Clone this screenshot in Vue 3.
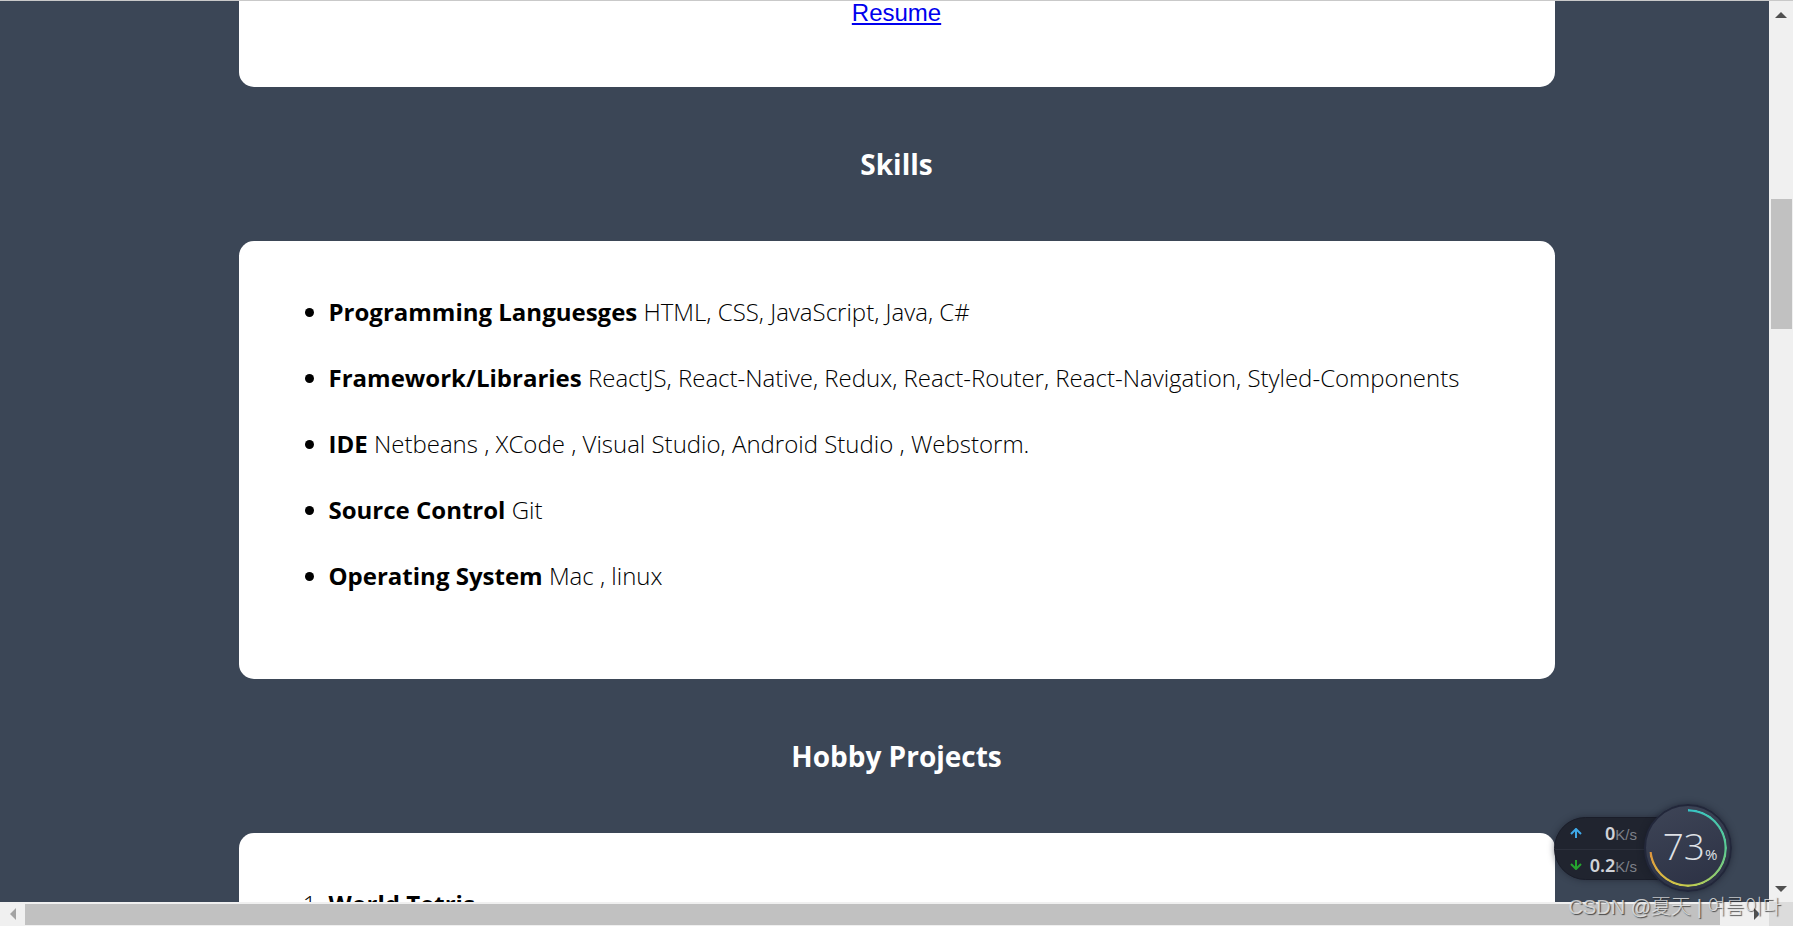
<script setup>
const skills = [
  { name: 'Programming Languesges', items: 'HTML, CSS, JavaScript, Java, C#' },
  { name: 'Framework/Libraries', items: 'ReactJS, React-Native, Redux, React-Router, React-Navigation, Styled-Components' },
  { name: 'IDE', items: 'Netbeans , XCode , Visual Studio, Android Studio , Webstorm.' },
  { name: 'Source Control', items: 'Git' },
  { name: 'Operating System', items: 'Mac , linux' },
]
const projects = ['World Tetris']
</script>

<template>
  <div class="window">
    <div class="pane">
      <main class="page">
        <section class="card resume"><a href="#resume">Resume</a></section>
        <h2>Skills</h2>
        <section class="card">
          <ul>
            <li v-for="s in skills" :key="s.name"><strong>{{ s.name }}</strong> {{ s.items }}</li>
          </ul>
        </section>
        <h2>Hobby Projects</h2>
        <section class="card">
          <ol>
            <li v-for="p in projects" :key="p"><strong>{{ p }}</strong></li>
          </ol>
        </section>
      </main>
    </div>

    <div class="vbar">
      <button class="arrow" aria-label="Scroll up">
        <svg width="12" height="6" viewBox="0 0 12 6"><path d="M0 6 6 0l6 6z" fill="#505050" /></svg>
      </button>
      <div class="vtrack"><div class="vthumb"></div></div>
      <button class="arrow" aria-label="Scroll down">
        <svg width="12" height="6" viewBox="0 0 12 6"><path d="M0 0h12L6 6z" fill="#505050" /></svg>
      </button>
    </div>

    <div class="hbar">
      <button class="arrow" aria-label="Scroll left">
        <svg width="6" height="12" viewBox="0 0 6 12"><path d="M6 0v12L0 6z" fill="#a3a3a3" /></svg>
      </button>
      <div class="htrack"><div class="hthumb"></div></div>
      <button class="arrow" aria-label="Scroll right">
        <svg width="6" height="12" viewBox="0 0 6 12"><path d="M0 0v12l6-6z" fill="#505050" /></svg>
      </button>
    </div>
    <div class="corner"></div>

    <aside class="monitor">
      <div class="pill">
        <div class="rate">
          <svg width="12" height="10" viewBox="0 0 12 10"><path d="M6 10V2M1 6l5-5 5 5" fill="none" stroke="#3fa9e8" stroke-width="2" /></svg>
          <span class="value"><b>0</b>K/s</span>
        </div>
        <div class="rate">
          <svg width="12" height="10" viewBox="0 0 12 10"><path d="M6 0V8M1 4l5 5 5-5" fill="none" stroke="#25a52f" stroke-width="2" /></svg>
          <span class="value"><b>0.2</b>K/s</span>
        </div>
      </div>
      <div class="gauge">
        <div class="ring"></div>
        <span class="load">73<small>%</small></span>
      </div>
    </aside>
    <div class="watermark">CSDN @夏天 | 여름이다</div>
  </div>
</template>

<style>
html,
body {
  margin: 0;
  overflow: hidden;
}
</style>

<style scoped>
.window {
  position: relative;
  box-sizing: border-box;
  display: grid;
  grid-template: minmax(0, 1fr) 24px / minmax(0, 1fr) 24px;
  height: 100vh;
  border-top: 1px solid #c9c9c9;
  overflow: hidden;
  background: #3b4656;
}
.pane {
  overflow: hidden;
}
.page {
  width: 100vw;
  font-family: "Open Sans", "Noto Sans", sans-serif;
  font-size: 24px;
  font-weight: 300;
  color: #000;
}
.card {
  box-sizing: border-box;
  width: 90%;
  max-width: 1316px;
  margin: 0 auto;
  padding: 38px 50px 70px;
  border-radius: 15px;
  background: #fff;
}
.resume {
  padding: 0 0 62px;
  border-radius: 0 0 15px 15px;
  font-family: "Liberation Sans", Arial, sans-serif;
  font-weight: 400;
  line-height: 24px;
  text-align: center;
}
.resume a {
  color: #00e;
}
h2 {
  margin: 0;
  font-size: 28px;
  font-weight: 700;
  line-height: 154px;
  text-align: center;
  color: #fff;
}
ul,
ol {
  margin: 0;
  padding-left: 40px;
  line-height: 66px;
}
strong {
  font-weight: 700;
}
.vbar {
  display: flex;
  flex-direction: column;
  background: #f0f0f0;
}
.hbar {
  display: flex;
  background: #f0f0f0;
}
.corner {
  background: #dcdcdc;
}
.arrow {
  display: flex;
  flex: none;
  align-items: center;
  justify-content: center;
  width: 25px;
  height: 24px;
  padding: 0;
  border: 0;
  background: none;
}
.vbar .arrow {
  width: 24px;
  height: 27px;
}
.vtrack {
  flex: 1;
  padding: 0 1px 0 2px;
}
.vthumb {
  height: 130px;
  margin-top: 171px;
  background: #c1c1c1;
}
.htrack {
  flex: 1;
  padding: 2px 0 1px;
}
.hthumb {
  width: calc(100% - 24px);
  height: 100%;
  background: #c1c1c1;
}
.monitor {
  position: absolute;
  right: 61px;
  bottom: 34px;
  display: flex;
  align-items: center;
  font-family: "Liberation Sans", Arial, sans-serif;
}
.pill {
  box-sizing: border-box;
  width: 112px;
  height: 63px;
  margin-right: -22px;
  border: 1px solid #1a1d29;
  border-radius: 32px 0 0 32px;
  background: #20242f;
  box-shadow: 0 0 6px rgba(20, 24, 36, 0.5);
}
.rate {
  box-sizing: border-box;
  display: flex;
  align-items: center;
  justify-content: space-between;
  height: 31px;
  padding: 0 28px 0 15px;
}
.rate + .rate {
  border-top: 1px solid #2c303c;
}
.value {
  font-size: 15px;
  color: #7d8089;
}
.value b {
  font-family: "Noto Sans", sans-serif;
  font-size: 18px;
  font-weight: 600;
  color: #d0d2d8;
}
.gauge {
  position: relative;
  box-sizing: border-box;
  display: flex;
  align-items: center;
  justify-content: center;
  width: 88px;
  height: 88px;
  padding: 4px 0 0 4px;
  border: 2px solid #22273a;
  border-radius: 50%;
  background: linear-gradient(160deg, #3e4557, #2b3043);
  box-shadow: 0 0 6px rgba(20, 24, 36, 0.6);
}
.ring {
  position: absolute;
  inset: 3px;
  border-radius: 50%;
  background: conic-gradient(#36c3c7 0deg, #5bcb93 90deg, #c3cc4e 180deg, #dcb742 225deg, #dd943c 264deg, transparent 264deg);
  mask: radial-gradient(closest-side, transparent 36px, #000 37px);
}
.load {
  display: flex;
  align-items: baseline;
  font-family: "Open Sans", sans-serif;
  font-size: 37px;
  font-weight: 300;
  line-height: 44px;
  color: #dfe1e6;
}
.load small {
  font-size: 15px;
  font-weight: 400;
}
.watermark {
  position: absolute;
  right: 12px;
  bottom: 6px;
  font-family: "Liberation Sans", "Noto Sans CJK SC", "Noto Sans CJK KR", sans-serif;
  font-size: 20px;
  font-weight: 300;
  line-height: 26px;
  white-space: nowrap;
  color: rgba(235, 235, 235, 0.8);
  text-shadow: 1px 1px 1px rgba(40, 40, 40, 0.8);
}
</style>
